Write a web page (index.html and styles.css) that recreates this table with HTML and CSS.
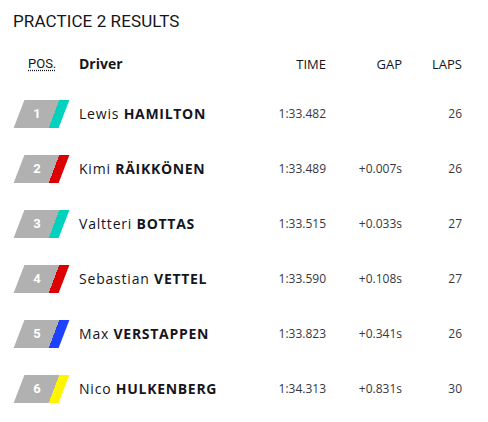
FILE: index.html
```html
<!DOCTYPE html>
<html lang="en">
<head>
    <meta charset="UTF-8">
    <title>Practice 2 Results</title>
    <link rel="stylesheet" href="styles.css">
</head>
<body>
    <h2 class="titulo">PRACTICE 2 RESULTS</h2>
    <div class="tabela">
        <div class="linha cabecalho">
            <div class="col-pos"><abbr title="Position">POS.</abbr></div>
            <div class="col-piloto">Driver</div>
            <div class="col-num">TIME</div>
            <div class="col-num">GAP</div>
            <div class="col-num">LAPS</div>
        </div>
        <div class="linha">
            <div class="col-pos"><span class="badge mercedes"><span>1</span></span></div>
            <div class="col-piloto">Lewis <b>HAMILTON</b></div>
            <div class="col-num">1:33.482</div>
            <div class="col-num"></div>
            <div class="col-num">26</div>
        </div>
        <div class="linha">
            <div class="col-pos"><span class="badge ferrari"><span>2</span></span></div>
            <div class="col-piloto">Kimi <b>RÄIKKÖNEN</b></div>
            <div class="col-num">1:33.489</div>
            <div class="col-num">+0.007s</div>
            <div class="col-num">26</div>
        </div>
        <div class="linha">
            <div class="col-pos"><span class="badge mercedes"><span>3</span></span></div>
            <div class="col-piloto">Valtteri <b>BOTTAS</b></div>
            <div class="col-num">1:33.515</div>
            <div class="col-num">+0.033s</div>
            <div class="col-num">27</div>
        </div>
        <div class="linha">
            <div class="col-pos"><span class="badge ferrari"><span>4</span></span></div>
            <div class="col-piloto">Sebastian <b>VETTEL</b></div>
            <div class="col-num">1:33.590</div>
            <div class="col-num">+0.108s</div>
            <div class="col-num">27</div>
        </div>
        <div class="linha">
            <div class="col-pos"><span class="badge redbull"><span>5</span></span></div>
            <div class="col-piloto">Max <b>VERSTAPPEN</b></div>
            <div class="col-num">1:33.823</div>
            <div class="col-num">+0.341s</div>
            <div class="col-num">26</div>
        </div>
        <div class="linha">
            <div class="col-pos"><span class="badge renault"><span>6</span></span></div>
            <div class="col-piloto">Nico <b>HULKENBERG</b></div>
            <div class="col-num">1:34.313</div>
            <div class="col-num">+0.831s</div>
            <div class="col-num">30</div>
        </div>
    </div>
</body>
</html>
```
FILE: styles.css
```css
body {
    font-family: Roboto, "Liberation Sans", sans-serif;
    margin: 0;
    padding: 10px 0 0 0;
    background-color: #fff;
    color: #15151e;
}
.titulo {
    font-size: 17px;
    font-weight: 400;
    line-height: 22px;
    margin: 0 0 9px 13px;
    letter-spacing: 0.1px;
}
.tabela {
    padding-left: 14px;
}
.linha {
    display: grid;
    grid-template-columns: 65px 167px 80px 76px 60px;
    align-items: center;
    height: 55px;
}
.cabecalho {
    height: 45px;
    font-size: 13px;
}
.col-num {
    text-align: right;
    font-family: "Open Sans", sans-serif;
    font-size: 12px;
    color: #38383f;
}
.cabecalho .col-num {
    font-size: 13px;
    color: #15151e;
}
.col-piloto {
    font-family: "Open Sans", sans-serif;
    font-size: 14px;
    letter-spacing: 0.8px;
}
.col-piloto b {
    font-weight: 700;
    letter-spacing: 0.7px;
}
.cabecalho .col-piloto {
    font-weight: 700;
    letter-spacing: 0;
}
.col-pos abbr {
    display: inline-block;
    margin-left: 14px;
    text-decoration: underline dotted;
    text-underline-offset: 2px;
}
/* etiqueta inclinada com a cor da equipe */
.badge {
    display: block;
    width: 45px;
    height: 28px;
    margin-left: 5px;
    transform: skewX(-21deg);
    text-align: center;
    font-weight: 700;
    font-size: 13px;
    line-height: 28px;
    color: #fff;
}
.badge span {
    display: block;
    width: 36px;
    transform: skewX(21deg);
}
.mercedes { background: linear-gradient(to right, #b1b1b1 35px, #00d2be 35px); }
.ferrari { background: linear-gradient(to right, #b1b1b1 35px, #dc0000 35px); }
.redbull { background: linear-gradient(to right, #b1b1b1 35px, #1e41ff 35px); }
.renault { background: linear-gradient(to right, #b1b1b1 35px, #fff500 35px); }
```
